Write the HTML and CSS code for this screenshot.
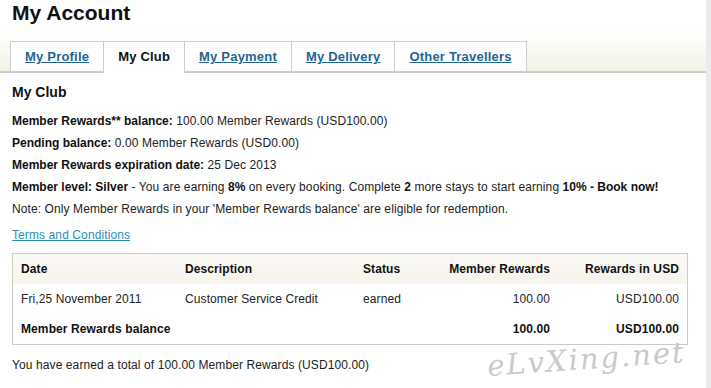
FILE: index.html
```html
<!DOCTYPE html>
<html lang="en">
<head>
    <meta charset="UTF-8">
    <title>My Account</title>
    <link rel="stylesheet" href="styles.css">
</head>
<body>
    <div class="page">
        <h1 class="page-title">My Account</h1>

        <div class="tabs">
            <a class="tab" href="#">My Profile</a>
            <span class="tab active">My Club</span>
            <a class="tab" href="#">My Payment</a>
            <a class="tab" href="#">My Delivery</a>
            <a class="tab" href="#">Other Travellers</a>
        </div>

        <div class="content">
            <h2 class="section-title">My Club</h2>
            <p class="line"><b>Member Rewards** balance:</b> 100.00 Member Rewards (USD100.00)</p>
            <p class="line"><b>Pending balance:</b> 0.00 Member Rewards (USD0.00)</p>
            <p class="line"><b>Member Rewards expiration date:</b> 25 Dec 2013</p>
            <p class="line"><b>Member level: Silver</b> - You are earning <b>8%</b> on every booking. Complete <b>2</b> more stays to start earning <b>10% - Book now!</b></p>
            <p class="line">Note: Only Member Rewards in your 'Member Rewards balance' are eligible for redemption.</p>
            <p class="terms"><a href="#">Terms and Conditions</a></p>

            <table class="rewards">
                <thead>
                    <tr>
                        <th class="col-date">Date</th>
                        <th class="col-desc">Description</th>
                        <th class="col-status">Status</th>
                        <th class="num">Member Rewards</th>
                        <th class="num col-usd">Rewards in USD</th>
                    </tr>
                </thead>
                <tbody>
                    <tr>
                        <td>Fri,25 November 2011</td>
                        <td>Customer Service Credit</td>
                        <td>earned</td>
                        <td class="num">100.00</td>
                        <td class="num">USD100.00</td>
                    </tr>
                    <tr class="total">
                        <td colspan="3">Member Rewards balance</td>
                        <td class="num">100.00</td>
                        <td class="num">USD100.00</td>
                    </tr>
                </tbody>
            </table>

            <p class="earned">You have earned a total of 100.00 Member Rewards (USD100.00)</p>
        </div>

        <div class="watermark">eLvXing.net</div>
    </div>
</body>
</html>
```

FILE: styles.css
```css
body, html {
    margin: 0;
    font-family: "Liberation Sans", Arial, sans-serif;
    background-color: #ebebeb;
    color: #222;
}
.page {
    position: relative;
    width: 706px;
    height: 388px;
    background-color: #fff;
}
.page-title {
    margin: 0;
    padding: 1px 12px 0;
    font-size: 21px;
    line-height: 24px;
    color: #111;
}
.tabs {
    display: flex;
    margin-top: 5px;
    padding: 11px 0 0 10px;
    height: 30px;
    background: linear-gradient(#fff, #f3f2e5);
    border-bottom: 2px solid #cececa;
}
.tab {
    display: block;
    height: 30px;
    line-height: 30px;
    padding: 0 14px;
    margin-right: -1px;
    border: 1px solid #cfcfcf;
    border-bottom: none;
    background-color: #fff;
    font-size: 13px;
    font-weight: bold;
    letter-spacing: 0.2px;
    color: #1f6593;
    text-decoration: underline;
    box-sizing: border-box;
}
.tab.active {
    height: 32px;
    color: #111;
    text-decoration: none;
    margin-bottom: -2px;
    position: relative; /* sits over the bar border */
}
.content {
    padding: 0 12px;
    font-size: 12px;
    letter-spacing: 0.1px;
}
.section-title {
    margin: 10px 0 9px;
    font-size: 14px;
    line-height: 18px;
    letter-spacing: 0;
    color: #111;
}
.line {
    margin: 0;
    line-height: 22px;
}
.line b {
    color: #111;
    letter-spacing: 0;
}
.terms {
    margin: 4px 0 0;
    line-height: 22px;
}
.terms a {
    color: #2c8dbd;
}
.rewards {
    margin-top: 7px;
    width: 676px;
    border: 1px solid #cdcabe;
    border-collapse: collapse;
}
.rewards th,
.rewards td {
    padding: 0 8px;
    height: 30px;
    text-align: left;
    font-size: 12px;
}
.rewards thead tr {
    background: linear-gradient(#fbfaf6, #f5f3ea);
}
.rewards th {
    color: #111;
}
.rewards .num {
    text-align: right;
}
.col-date {
    width: 148px;
}
.col-desc {
    width: 162px;
}
.col-status {
    width: 60px;
}
.col-usd {
    width: 113px;
}
.total td {
    font-weight: bold;
    color: #111;
}
.earned {
    margin: 10px 0 0;
    line-height: 20px;
}
.watermark {
    position: absolute;
    right: 20px;
    bottom: 12px;
    font-family: "DejaVu Serif", serif;
    font-style: italic;
    font-size: 29px;
    line-height: 34px;
    letter-spacing: 2px;
    color: #cacaca;
    transform: rotate(-4deg);
}
```
